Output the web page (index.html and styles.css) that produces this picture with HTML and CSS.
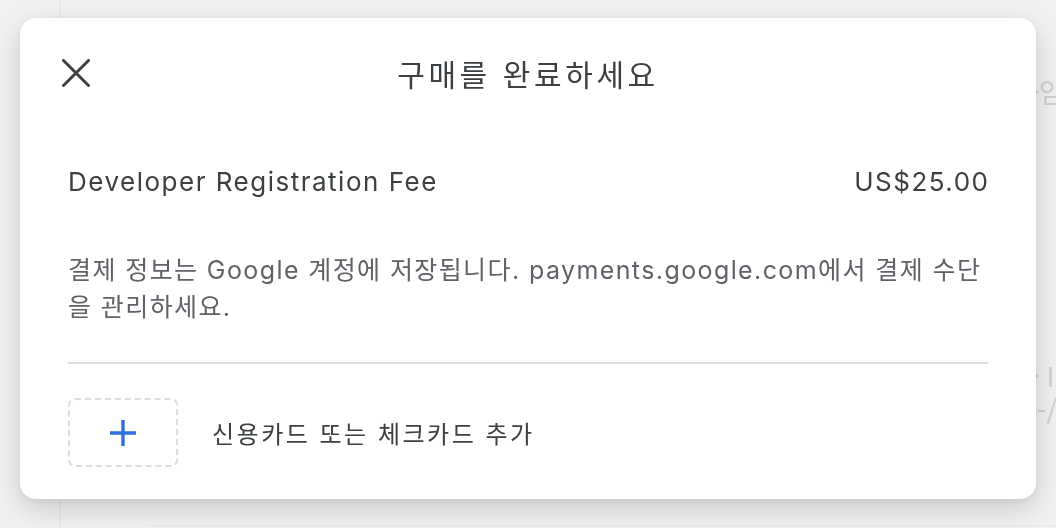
FILE: index.html
```html
<!DOCTYPE html>
<html lang="ko">
<head>
<meta charset="utf-8">
<title>구매를 완료하세요</title>
<link rel="stylesheet" href="styles.css">
</head>
<body>
<div class="page">
  <div class="sidebar"></div>
  <div class="main">
    <div class="ghost ghost-1">하임</div>
    <div class="ghost ghost-2">하 I</div>
    <div class="ghost ghost-3">-/ㅈ</div>
    <div class="main-rule"></div>
  </div>
</div>

<div class="dialog" role="dialog" aria-label="구매를 완료하세요">
  <header class="dialog-header">
    <button class="close-btn" aria-label="닫기">
      <svg width="28" height="28" viewBox="0 0 28 28" aria-hidden="true">
        <path d="M1.5 1.5 L26.5 26.5 M26.5 1.5 L1.5 26.5" stroke="#3c4043" stroke-width="3" stroke-linecap="round" fill="none"/>
      </svg>
    </button>
    <h1 class="dialog-title">구매를 완료하세요</h1>
    <span class="header-spacer"></span>
  </header>

  <div class="item-row">
    <span class="item-name">Developer Registration Fee</span>
    <span class="item-price">US$25.00</span>
  </div>

  <p class="note">결제 정보는 Google 계정에 저장됩니다. payments.google.com에서 결제 수단을 관리하세요.</p>

  <hr class="divider">

  <div class="add-card">
    <span class="add-box">
      <svg width="28" height="28" viewBox="0 0 28 28" aria-hidden="true">
        <path d="M14 1 V27 M1 14 H27" stroke="#2f6fde" stroke-width="3.4" fill="none"/>
      </svg>
    </span>
    <span class="add-label">신용카드 또는 체크카드 추가</span>
  </div>
</div>
</body>
</html>
```

FILE: styles.css
```css
html, body {
  margin: 0;
  padding: 0;
}

body {
  width: 1056px;
  height: 528px;
  overflow: hidden;
  background: #f1f1f1;
  font-family: "Inter", "Noto Sans CJK KR", sans-serif;
  color: #3c4043;
}

.page {
  display: flex;
  height: 528px;
}

.sidebar {
  width: 59px;
  border-right: 2px solid #e9e9e9;
  flex: none;
}

.main {
  position: relative;
  flex: 1;
}

.ghost {
  position: absolute;
  left: 953px;
  font-size: 27px;
  line-height: 30px;
  color: #cfcfcf;
  font-family: "Noto Sans CJK KR", sans-serif;
  white-space: nowrap;
}
.ghost-1 { top: 77px; }
.ghost-2 { top: 361px; }
.ghost-3 { top: 395px; left: 976px; }

.main-rule {
  position: absolute;
  left: 87px;
  right: 0;
  top: 525px;
  border-top: 1px solid #e6e6e6;
}

.dialog {
  position: fixed;
  left: 20px;
  top: 18px;
  width: 1016px;
  box-sizing: border-box;
  padding: 0 48px 32px;
  background: #fff;
  border-radius: 16px;
  box-shadow: 0 10px 28px rgba(0, 0, 0, 0.16), 0 2px 8px rgba(0, 0, 0, 0.06);
}

.dialog-header {
  height: 110px;
  display: flex;
  align-items: center;
}

.close-btn {
  width: 28px;
  height: 28px;
  padding: 0;
  margin-left: -6px;
  border: none;
  background: none;
  display: flex;
  cursor: pointer;
}

.header-spacer {
  width: 22px;
}

.dialog-title {
  flex: 1;
  margin: 0;
  text-align: center;
  font-size: 30px;
  font-weight: 400;
  letter-spacing: 3.6px;
  color: #3c4043;
  font-family: "Noto Sans CJK KR", sans-serif;
}

.item-row {
  margin-top: 38px;
  display: flex;
  justify-content: space-between;
  align-items: center;
  line-height: 32px;
  font-size: 26px;
  letter-spacing: 1.5px;
  color: #3c4043;
}

.item-price {
  margin-right: -1.5px;
}

.note {
  margin: 54px 0 0;
  font-size: 25px;
  line-height: 37px;
  letter-spacing: 1.4px;
  color: #5f6368;
}

.divider {
  margin: 36px 0 0;
  border: none;
  border-top: 2px solid #dcdce2;
}

.add-card {
  margin-top: 34px;
  display: flex;
  align-items: center;
  gap: 34px;
}

.add-box {
  width: 110px;
  height: 69px;
  box-sizing: border-box;
  border: 2px dashed #dadce0;
  border-radius: 7px;
  display: flex;
  align-items: center;
  justify-content: center;
}

.add-label {
  font-size: 24px;
  letter-spacing: 2.5px;
  color: #3c4043;
  font-family: "Noto Sans CJK KR", sans-serif;
}
```
